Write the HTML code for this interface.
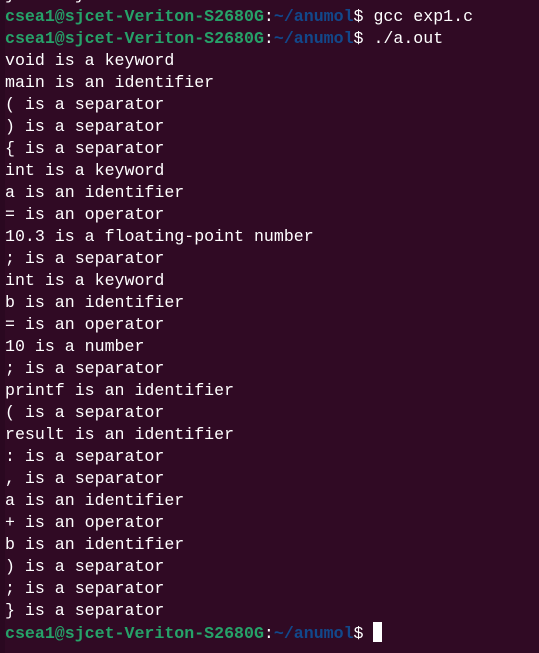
<!DOCTYPE html>
<html><head><style>
body{margin:0;width:539px;height:653px;background:#300a24;overflow:hidden;position:relative}
.strip{position:absolute;left:0;top:0;width:5px;height:653px;background:#2a0820}
pre{position:absolute;left:5px;top:-16px;margin:0;font-family:"Liberation Mono",monospace;font-size:16.6px;line-height:22px;color:#ffffff}
.g{color:#26a269;font-weight:bold}.b{color:#12488b;font-weight:bold}
.c{display:inline-block;width:9px;height:20px;background:#fff;vertical-align:-4px}
</style></head><body><div class="strip"></div><pre>}      }
<span class="g">csea1@sjcet-Veriton-S2680G</span>:<span class="b">~/anumol</span>$ gcc exp1.c
<span class="g">csea1@sjcet-Veriton-S2680G</span>:<span class="b">~/anumol</span>$ ./a.out
void is a keyword
main is an identifier
( is a separator
) is a separator
{ is a separator
int is a keyword
a is an identifier
= is an operator
10.3 is a floating-point number
; is a separator
int is a keyword
b is an identifier
= is an operator
10 is a number
; is a separator
printf is an identifier
( is a separator
result is an identifier
: is a separator
, is a separator
a is an identifier
+ is an operator
b is an identifier
) is a separator
; is a separator
} is a separator
<span class="g">csea1@sjcet-Veriton-S2680G</span>:<span class="b">~/anumol</span>$ <span class="c"></span></pre></body></html>
